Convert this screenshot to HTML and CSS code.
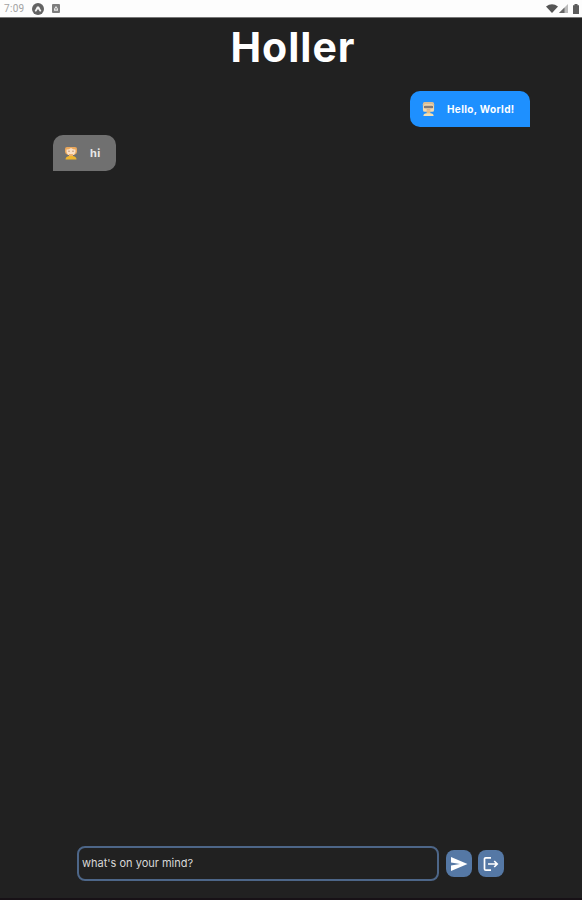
FILE: index.html
```html
<!DOCTYPE html>
<html lang="en">
<head>
    <meta charset="UTF-8">
    <meta name="viewport" content="width=device-width, initial-scale=1.0">
    <title>Holler</title>
    <link rel="stylesheet" href="styles.css">
</head>
<body>
    <div class="status-bar">
        <span class="clock">7:09</span>
        <svg class="app-icon" width="12" height="12" viewBox="0 0 12 12">
            <circle cx="6" cy="6" r="6" fill="#636363"/>
            <path d="M2.6 8 L5 3.4 H7 L9.4 8 L8 8.8 L6 6 L4 8.8 Z" fill="#f4f4f4"/>
        </svg>
        <svg class="card-icon" width="8" height="9" viewBox="0 0 8 9">
            <rect width="8" height="9" rx="1" fill="#7d7d7d"/>
            <path d="M2 6.8 V4.8 L4 2 L6 4.8 V6.8 Z" fill="#e8e8e8"/>
            <rect x="3.3" y="4.2" width="1.4" height="1.4" fill="#7d7d7d"/>
        </svg>
        <div class="signals">
            <svg width="12" height="9" viewBox="0 0 12 9">
                <path d="M0 2.6 Q6 -2.2 12 2.6 L6 9 Z" fill="#555"/>
            </svg>
            <svg width="9" height="9" viewBox="0 0 9 9">
                <path d="M0 9 L9 0 V9 Z" fill="#bbb"/>
                <path d="M0 9 L5.5 3.5 V9 Z" fill="#666"/>
            </svg>
            <svg class="battery" width="6" height="10" viewBox="0 0 6 10">
                <path d="M0 1.2 H1.5 V0 H4.5 V1.2 H6 V10 H0 Z" fill="#5c5c5c"/>
            </svg>
        </div>
    </div>

    <h1>Holler</h1>

    <div class="messages">
        <div class="message sent">
            <svg class="avatar" width="13" height="16" viewBox="0 0 14 16">
                <rect x="1" y="1" width="12" height="10" rx="2" fill="#f3d9ae"/>
                <path d="M1 5 V2.5 Q1 .5 3 .5 H11 Q13 .5 13 2.5 V5 L11 3 H3 Z" fill="#d8bd96"/>
                <rect x="2" y="4.5" width="10" height="2.6" rx="1" fill="#817a78"/>
                <rect x="5" y="8.5" width="4" height="1" fill="#c99873"/>
                <rect x="5" y="10" width="4" height="3" fill="#e4bc86"/>
                <path d="M1.5 15.5 Q1.5 12.5 5 12.5 H9 Q12.5 12.5 12.5 15.5 Z" fill="#f4dfb0"/>
            </svg>
            <span class="text">Hello, World!</span>
        </div>
        <div class="message received">
            <svg class="avatar" width="12" height="14" viewBox="0 0 12 14">
                <path d="M0 3 Q0 1 2 1 H10 Q12 1 12 3 V6 Q12 8 9 9 H3 Q0 8 0 6 Z" fill="#e9a75c"/>
                <path d="M1.5 3.5 Q4 3.5 6 2 Q8 3.5 10.5 3.5 V6 Q9.5 9.5 6 9.5 Q2.5 9.5 1.5 6 Z" fill="#fbe0c5"/>
                <rect x="3.2" y="4.7" width="1.6" height="1" fill="#b58c70"/>
                <rect x="7.2" y="4.7" width="1.6" height="1" fill="#b58c70"/>
                <rect x="4" y="8" width="4" height="3" fill="#edb06c"/>
                <path d="M.5 13.5 Q.5 10.5 4 10 H8 Q11.5 10.5 11.5 13.5 Z" fill="#efb52c"/>
            </svg>
            <span class="text">hi</span>
        </div>
    </div>

    <form class="composer">
        <input type="text" name="message" placeholder="what's on your mind?" aria-label="Message">
        <button type="submit" aria-label="Send">
            <svg width="18" height="16" viewBox="0 0 18 16">
                <path d="M1 1 L17.5 8 L1 15 V9.5 L10 8 L1 6.5 Z" fill="#fff"/>
            </svg>
        </button>
        <button type="button" aria-label="Log out">
            <svg width="16" height="16" viewBox="0 0 16 16" fill="none" stroke="#fff" stroke-width="1.7">
                <path d="M8 1.8 H2.8 Q1.5 1.8 1.5 3 V13 Q1.5 14.2 2.8 14.2 H8"/>
                <path d="M5 8 H14 M11.2 5 L14.2 8 L11.2 11"/>
            </svg>
        </button>
    </form>
</body>
</html>
```

FILE: styles.css
```css
* {
    box-sizing: border-box;
}
body {
    font-family: Inter, "Open Sans", sans-serif;
    background-color: #212121;
    color: white;
    margin: 0;
    height: 100vh;
    display: flex;
    flex-direction: column;
    overflow: hidden;
    border-bottom: 2px solid #171116;
}
.status-bar {
    height: 18px;
    flex-shrink: 0;
    background-color: #fdfdfd;
    border-bottom: 1px solid #777;
    display: flex;
    align-items: center;
    padding: 0 3px 0 4px;
}
.clock {
    width: 28px;
    color: #a2a2a2;
    font-family: Roboto, sans-serif;
    font-size: 10px;
    letter-spacing: 0.3px;
}
.card-icon {
    margin-left: 8px;
}
.signals {
    display: flex;
    align-items: center;
    margin-left: auto;
    gap: 1px;
}
.battery {
    margin-left: 4px;
}
h1 {
    margin: 4px 0 0;
    height: 51px;
    padding-left: 4px;
    line-height: 50px;
    font-size: 41px;
    font-weight: 700;
    letter-spacing: 1px;
    text-align: center;
}
.messages {
    flex: 1;
    display: flex;
    flex-direction: column;
    gap: 8px;
    padding: 18px 52px 0 53px;
}
.message {
    height: 36px;
    display: flex;
    align-items: center;
    padding: 0 15px 0 12px;
    border-radius: 10px;
    font-size: 10px;
    font-weight: 700;
    white-space: nowrap;
}
.sent {
    align-self: flex-end;
    width: 120px;
    background-color: #1e90ff;
    border-bottom-right-radius: 0;
}
.received {
    align-self: flex-start;
    width: 63px;
    background-color: #707070;
    border-bottom-left-radius: 0;
}
.avatar {
    flex-shrink: 0;
}
.sent .text {
    margin-left: 12px;
    letter-spacing: 0.35px;
}
.received .text {
    margin-left: 13px;
    font-size: 11px;
    letter-spacing: 0.3px;
    color: #e8e8e8;
}
.composer {
    display: flex;
    align-items: center;
    margin: 0 78px 17px 77px;
}
.composer input {
    flex: 1;
    min-width: 0;
    height: 35px;
    margin-right: 7px;
    padding: 0 3px 2px;
    background-color: transparent;
    border: 2px solid #4d6688;
    border-radius: 8px;
    color: white;
    font-family: inherit;
    font-size: 11px;
    outline: none;
}
.composer input::placeholder {
    color: #d8d8d8;
    opacity: 1;
}
.composer button {
    display: flex;
    align-items: center;
    justify-content: center;
    width: 26px;
    height: 27px;
    padding: 0;
    background-color: #5578a5;
    border: none;
    border-radius: 8px;
    cursor: pointer;
}
.composer button + button {
    margin-left: 6px;
}
```
